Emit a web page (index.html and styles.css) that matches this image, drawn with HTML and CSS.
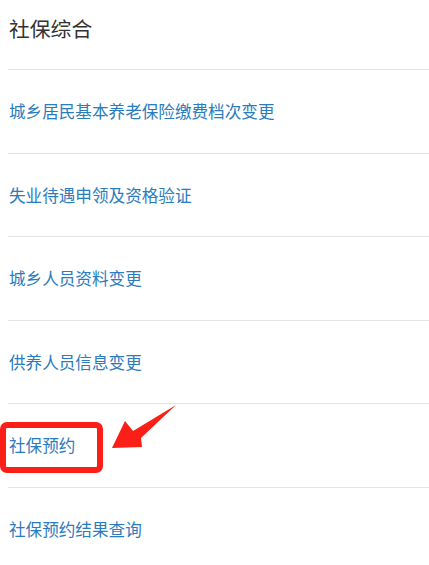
FILE: index.html
```html
<!DOCTYPE html>
<html lang="zh-CN">
<head>
<meta charset="utf-8">
<title>社保综合</title>
<link rel="stylesheet" href="styles.css">
</head>
<body>
<div class="page">
  <div class="title">社保综合</div>
  <ul class="list">
    <li class="item"><a href="#">城乡居民基本养老保险缴费档次变更</a></li>
    <li class="item"><a href="#">失业待遇申领及资格验证</a></li>
    <li class="item"><a href="#">城乡人员资料变更</a></li>
    <li class="item"><a href="#">供养人员信息变更</a></li>
    <li class="item"><a href="#">社保预约</a></li>
    <li class="item"><a href="#">社保预约结果查询</a></li>
  </ul>
  <div class="mark-box"></div>
  <svg class="mark-arrow" width="429" height="565" viewBox="0 0 429 565">
    <polygon points="112,448 125,421 133,431 176,405 141,438 142,447" fill="#fb1f17"/>
  </svg>
</div>
</body>
</html>
```

FILE: styles.css
```css
html, body {
  margin: 0;
  padding: 0;
  background: #fff;
}
.page {
  position: relative;
  padding-left: 8px;
  font-family: "Noto Sans CJK SC", "Noto Sans", sans-serif;
  overflow: hidden;
  height: 565px;
}
.title {
  font-size: 20.8px;
  line-height: 31px;
  color: #333;
  padding-top: 13px;
  height: 25px;
  padding-bottom: 0;
  box-sizing: content-box;
  height: 56px;
  padding-left: 1px;
}
.list {
  list-style: none;
  margin: 0;
  padding: 0;
}
.item {
  border-top: 1px solid #e3e3e3;
  height: 82.5px;
  display: flex;
  align-items: center;
  padding-left: 1px;
}
.item a {
  color: #2a7cbd;
  text-decoration: none;
  font-size: 16.6px;
  line-height: 24px;
}
.mark-box {
  position: absolute;
  left: 0;
  top: 422px;
  width: 103px;
  height: 51px;
  box-sizing: border-box;
  border: 6px solid #fb1f17;
  border-radius: 7px;
}
.mark-arrow {
  position: absolute;
  left: 0;
  top: 0;
  pointer-events: none;
}
```
